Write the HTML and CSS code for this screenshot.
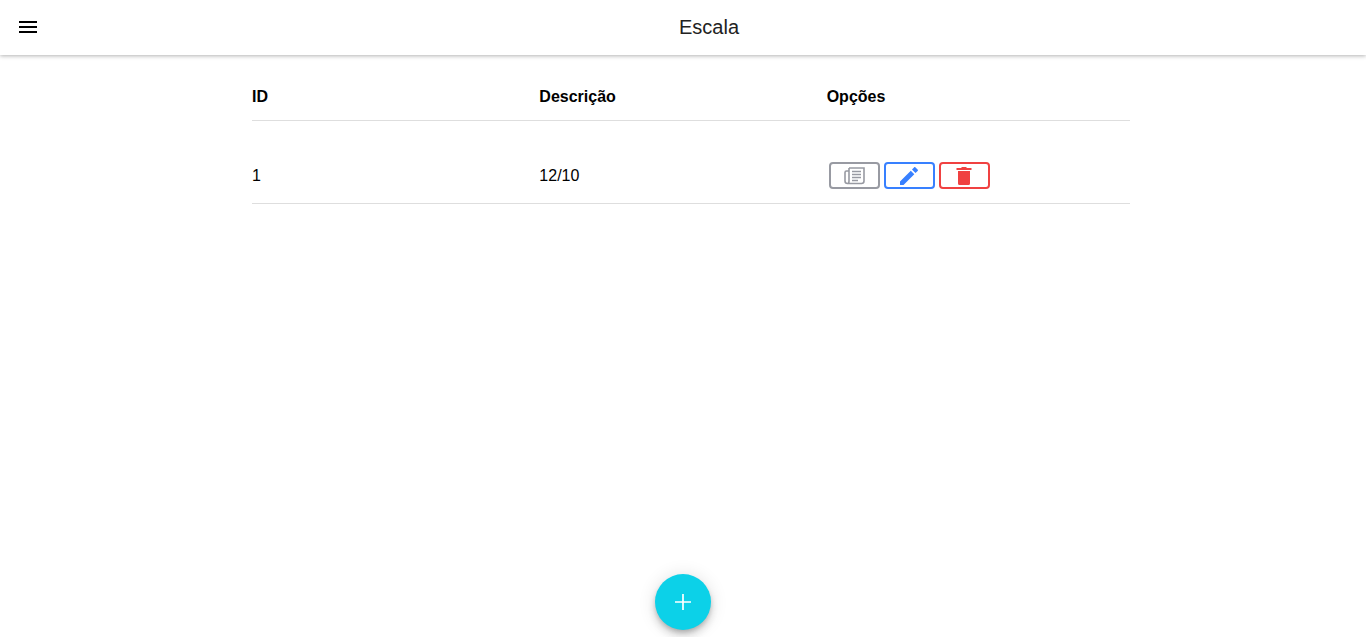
FILE: index.html
```html
<!DOCTYPE html>
<html lang="pt-BR">
<head>
    <meta charset="UTF-8">
    <meta name="viewport" content="width=device-width, initial-scale=1.0">
    <title>Escala</title>
    <link rel="stylesheet" href="styles.css">
</head>
<body>
    <header class="toolbar">
        <button type="button" class="menu-button" aria-label="Menu">
            <svg width="18" height="12" viewBox="0 0 18 12" fill="currentColor"><path d="M0 0h18v2H0zM0 5h18v2H0zM0 10h18v2H0z"/></svg>
        </button>
        <h1 class="title">Escala</h1>
    </header>

    <main class="content">
        <table class="list">
            <thead>
                <tr>
                    <th>ID</th>
                    <th>Descrição</th>
                    <th>Opções</th>
                </tr>
            </thead>
            <tbody>
                <tr>
                    <td>1</td>
                    <td>12/10</td>
                    <td class="options">
                        <button type="button" class="option view" aria-label="Visualizar">
                            <svg width="22" height="18" viewBox="0 0 22 18" fill="none" stroke="currentColor">
                                <path stroke-width="1.6" d="M6 1h15v13q0 2.500-2.500 2.500H4.500Q2 16.500 2 14V5.500Q2 4 3.500 4H6M6 1v13q0 2.500-1.500 2.500"/>
                                <path stroke-width="1.6" d="M9 4.500h9M9 7.500h9M9 10.500h9M9 13.500h6"/>
                            </svg>
                        </button>
                        <button type="button" class="option edit" aria-label="Editar">
                            <svg width="18" height="18" viewBox="0 0 18 18" fill="currentColor">
                                <path d="M0 14.500V18h3.500L14.300 7.200l-3.500-3.500zM17.600 4c.5-.5.5-1 0-1.500L15.500.4c-.5-.5-1-.5-1.500 0L12 2.500 15.500 6z"/>
                            </svg>
                        </button>
                        <button type="button" class="option remove" aria-label="Excluir">
                            <svg width="16" height="18" viewBox="0 0 16 18" fill="currentColor">
                                <path d="M2 4h12v12.500q0 1.500-1.500 1.500h-9Q2 18 2 16.500zM15.500 1v2H.5V1h4.500l1-1h4l1 1z"/>
                            </svg>
                        </button>
                    </td>
                </tr>
            </tbody>
        </table>
    </main>

    <button type="button" class="fab" aria-label="Adicionar">
        <svg width="16" height="16" viewBox="0 0 16 16" fill="none" stroke="currentColor" stroke-width="1.7"><path d="M8 0v16M0 8h16"/></svg>
    </button>
</body>
</html>
```
FILE: styles.css
```css
* {
    margin: 0;
    padding: 0;
    box-sizing: border-box;
}

body {
    font-family: "Liberation Sans", Arial, sans-serif;
    font-size: 16px;
    color: #000;
    background-color: #fff;
    min-height: 100vh;
}

button {
    display: flex;
    justify-content: center;
    align-items: center;
    cursor: pointer;
}

.toolbar {
    display: flex;
    align-items: center;
    height: 55px;
    padding: 0 0 1px 4px;
    box-shadow: 0 1px 4px rgba(0, 0, 0, 0.3);
}

.menu-button {
    width: 48px;
    height: 48px;
    border: none;
    background: none;
    color: #000;
}

.title {
    flex: 1;
    font-size: 20px;
    font-weight: 400;
    line-height: 24px;
    text-align: center;
    color: #222;
}

.content {
    max-width: 894px;
    margin: 0 auto;
    padding: 33px 0 0 16px;
}

.list,
.list thead,
.list tbody {
    display: block;
}

.list tr {
    display: grid;
    grid-template-columns: repeat(3, 1fr);
    align-items: center;
    padding: 41px 16px 14px 0;
    border-bottom: 1px solid #dedede;
}

.list thead tr {
    padding: 0 16px 14px 0;
}

.list th,
.list td {
    text-align: left;
    line-height: 18px;
}

.list .options {
    display: flex;
    gap: 4px;
    padding-left: 2px;
}

.option {
    width: 51px;
    height: 27px;
    border: 2px solid currentColor;
    border-radius: 4px;
    background-color: #fff;
}

.view {
    color: #989aa2;
}

.edit {
    color: #3880ff;
}

.remove {
    color: #f04141;
}

.fab {
    position: fixed;
    bottom: 7px;
    left: calc(50% - 28px);
    width: 56px;
    height: 56px;
    border: none;
    border-radius: 50%;
    background-color: #0cd1e8;
    color: #fff;
    box-shadow: 0 3px 5px -1px rgba(0, 0, 0, 0.2), 0 6px 10px rgba(0, 0, 0, 0.14), 0 1px 18px rgba(0, 0, 0, 0.12);
}
```
